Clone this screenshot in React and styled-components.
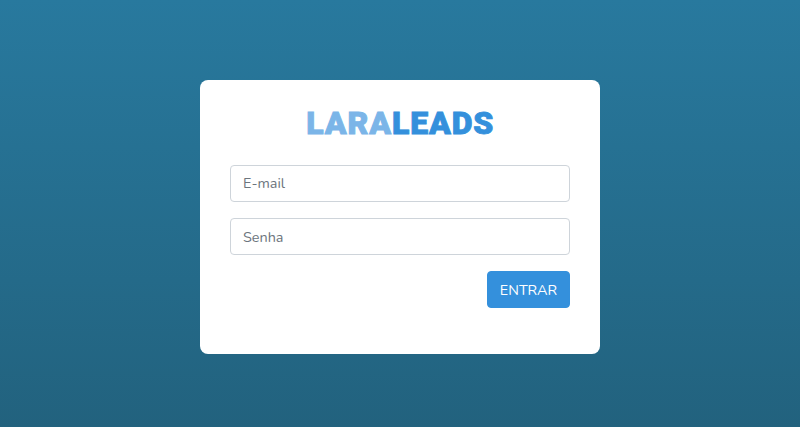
import React from "react";
import styled, { createGlobalStyle } from "styled-components";

const GlobalStyle = createGlobalStyle`
  *, *::before, *::after { box-sizing: border-box; }
  body {
    margin: 0;
    font-family: Nunito, "Open Sans", sans-serif;
    font-size: 14.4px;
    line-height: 1.6;
  }
`;

const Page = styled.main`
  height: 100vh;
  padding-top: 80px;
  background: linear-gradient(#28799e, #22627e);
`;

const Card = styled.section`
  width: 400px;
  height: 274px;
  margin: 0 auto;
  padding: 24px 30px;
  border-radius: 8px;
  background: #fff;
`;

const Logo = styled.h1`
  margin: 0 0 22.7px;
  font: 900 32px/38px Roboto, sans-serif;
  letter-spacing: 0.9px;
  text-indent: 0.5px;
  -webkit-text-stroke: 0.9px currentColor;
  color: #3490dc;
  text-align: center;
`;

const LogoLight = styled.span`
  color: #7bb5e8;
`;

const Form = styled.form`
  display: flex;
  flex-direction: column;
  gap: 16.7px;
`;

const Input = styled.input`
  width: 100%;
  height: 37px;
  padding: 6px 12px;
  border: 1px solid #ced4da;
  border-radius: 4px;
  font: inherit;
  &::placeholder { color: #6c757d; opacity: 1; }
`;

const Button = styled.button`
  align-self: flex-end;
  width: 83px;
  height: 37px;
  margin-top: -0.9px;
  padding: 2px 0 0;
  border: 1px solid #3490dc;
  border-radius: 4px;
  background: #3490dc;
  color: #fff;
  font: inherit;
`;

export default function App() {
  return (
    <Page>
      <GlobalStyle />
      <Card>
        <Logo><LogoLight>LARA</LogoLight>LEADS</Logo>
        <Form>
          <Input type="email" placeholder="E-mail" />
          <Input type="password" placeholder="Senha" />
          <Button type="button">ENTRAR</Button>
        </Form>
      </Card>
    </Page>
  );
}
